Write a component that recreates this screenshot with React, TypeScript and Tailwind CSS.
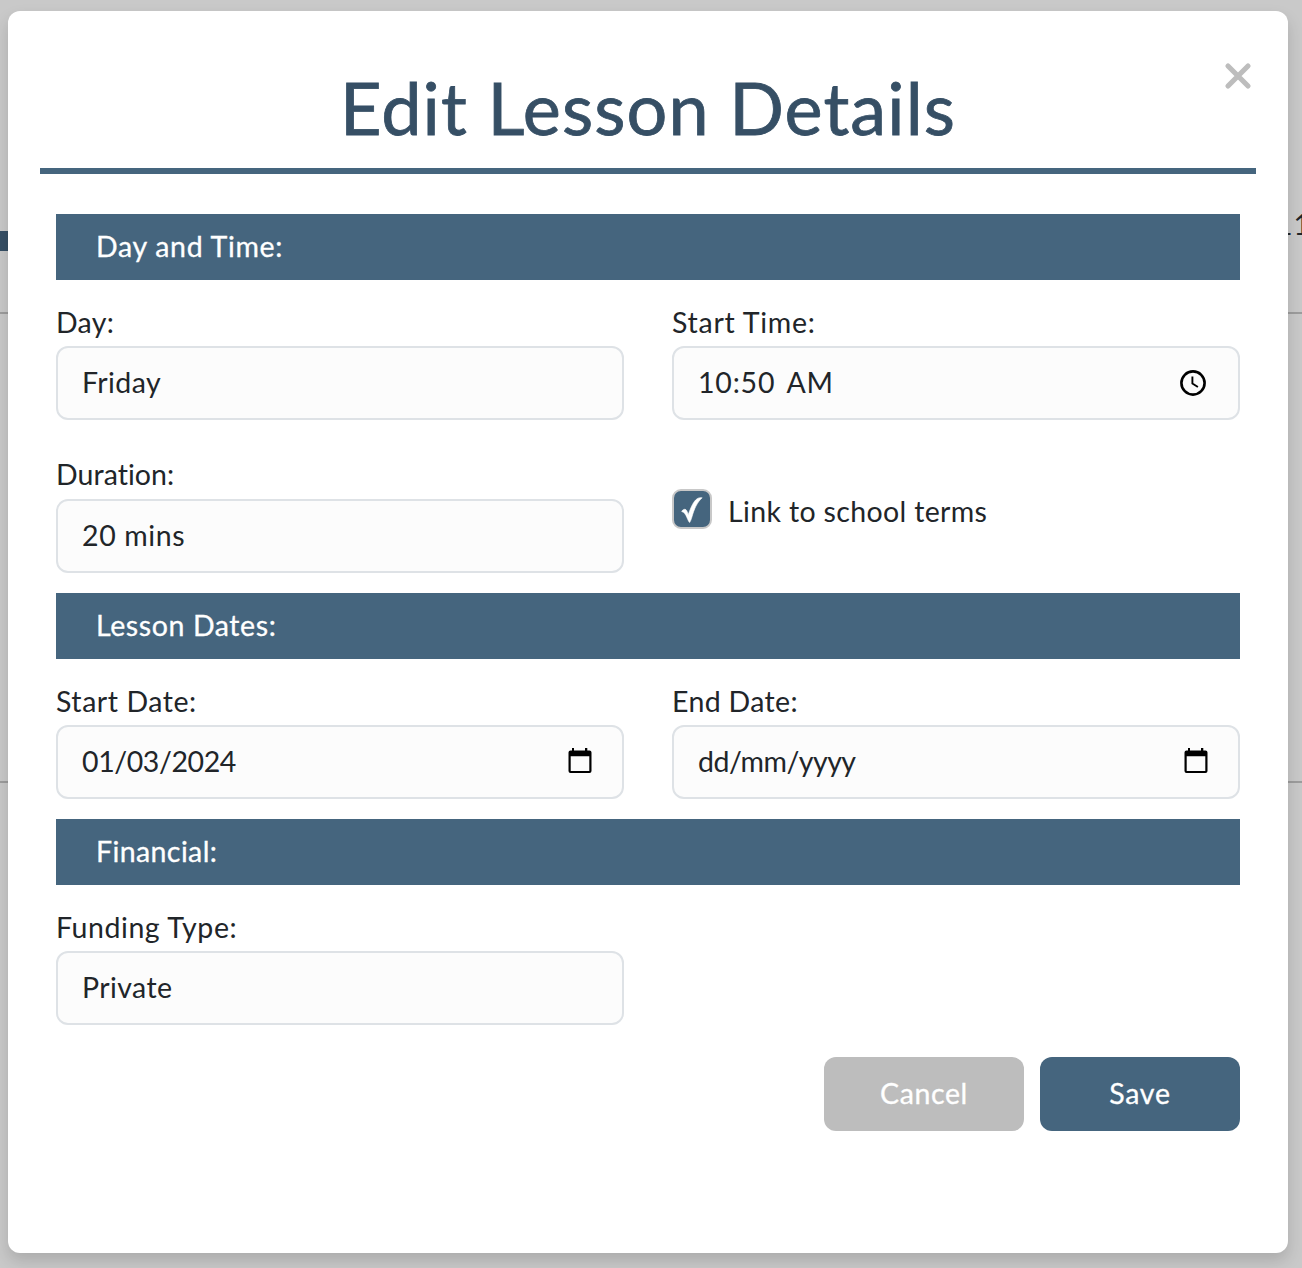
import type { ReactNode } from "react";

function SectionBar({ children }: { children: ReactNode }) {
  return (
    <h2 className="flex h-[66px] items-center bg-[#45657e] pb-[3px] pl-10 text-white [-webkit-text-stroke:0.3px_#fff]">{children}</h2>
  );
}

function Field({ label, value, icon }: { label: ReactNode; value: ReactNode; icon?: ReactNode }) {
  return (
    <div className="w-[568px]">
      <div className="flex h-12 items-center">{label}</div>
      <div className="flex h-[74px] items-center justify-between rounded-[12px] border-2 border-[#dee2e6] bg-[#fcfcfc] pb-0.5 pl-6 pr-[29px]">
        {value}
        {icon}
      </div>
    </div>
  );
}

function ClockIcon() {
  return (
    <svg className="mt-0.5 mr-0.5 size-[28px]" viewBox="0 0 28 28" fill="none" stroke="#000">
      <circle cx="14" cy="14" r="11.6" strokeWidth="2.6" />
      <path d="M13.400 7.500v7l5.500 3.500" strokeWidth="1.9" />
    </svg>
  );
}

function CalendarIcon() {
  return (
    <svg className="mr-[1.5px] h-[26px] w-[24px]" viewBox="0 0 24 26">
      <path
        fillRule="evenodd"
        d="M4 0h2v2.500h11V0h2.300v2.500H21.500a2 2 0 0 1 2 2V23a2 2 0 0 1-2 2H2.500a2 2 0 0 1-2-2V4.500a2 2 0 0 1 2-2H4zM2.700 8.200v14.700h18.600V8.200z"
      />
    </svg>
  );
}

export default function App() {
  return (
    <div className="relative h-[1268px] w-[1302px] overflow-hidden bg-[#c9c9c9] font-['Lato','Noto_Sans',sans-serif] text-[28.5px] leading-10 whitespace-nowrap text-[#212529]">
      <div className="flex h-full flex-col">
        <div className="flex h-[312px] justify-between">
          <div className="mt-[231px] h-5 w-10 bg-[#364f65]" />
          <div className="mt-[204px] w-[26px] tracking-[1px]">11</div>
        </div>
        <div className="h-[471px] border-y-2 border-[#9d9d9d]" />
      </div>

      <div
        role="dialog"
        className="absolute top-[11px] left-2 h-[1242px] w-[1280px] rounded-[12px] bg-white px-8 shadow-[0_8px_16px_rgba(0,0,0,0.15)]"
      >
        <button aria-label="Close" className="absolute top-[51px] right-[36px]">
          <svg className="size-[28px]" viewBox="0 0 28 28" stroke="#bdbdbd" strokeWidth="5.2" strokeLinecap="round">
            <path d="M4 4 24 24M24 4 4 24" />
          </svg>
        </button>
        <header className="flex h-[163px] items-center justify-center border-b-6 border-[#45657e] pt-[35px]">
          <h1 className="text-[72px] leading-none tracking-[1.1px] text-[#364f65] [-webkit-text-stroke:0.8px_#364f65]">Edit Lesson Details</h1>
        </header>

        <div className="px-4 pt-10">
          <SectionBar><span className="tracking-[0.7px]">Day and Time:</span></SectionBar>
          <div className="mt-[18px] flex justify-between">
            <Field label={<span className="tracking-[0.3px]">Day:</span>} value={<span className="tracking-[0.4px]">Friday</span>} />
            <Field
              label={<span className="tracking-[0.75px]">Start Time:</span>}
              value={<span className="tracking-[0.8px] [word-spacing:4px]">10:50 AM</span>}
              icon={<ClockIcon />}
            />
          </div>
          <div className="mt-[31px] flex justify-between">
            <Field label={<span className="mb-0.5 tracking-[0.05px]">Duration:</span>} value={<span className="tracking-[0.6px]">20 mins</span>} />
            <div className="mt-[38px] flex h-10 w-[568px]">
              <span className="flex size-10 items-center justify-center rounded-[9px] border-2 border-[#c8c8c8] bg-[#45657e]">
                <svg className="size-9" viewBox="0 0 36 36" fill="#fff" stroke="#fff" strokeWidth="0.6" strokeLinejoin="round">
                  <path d="M7.700 20.500c.6-1.500 2.500-2.700 4-2 1.200.7 1.800 3 2.500 5.200C17 16 19.500 10 23.500 7.500c1.500-.9 3.300-1 4.700-.7-5 4.200-8.200 11.500-10.300 19.200-.7 2.300-1.500 4.500-2.300 5.500-.8-.7-1.700-2.800-2.600-4.800-1.300-3-2.600-5.500-5.300-6.200z" />
                </svg>
              </span>
              <span className="mt-0.5 ml-4 tracking-[0.35px]">Link to school terms</span>
            </div>
          </div>
          <div className="mt-5"><SectionBar><span className="tracking-[0.6px]">Lesson Dates:</span></SectionBar></div>
          <div className="mt-[18px] flex justify-between">
            <Field
              label={<span className="tracking-[0.55px]">Start Date:</span>}
              value={<span className="tracking-[-0.4px]">01/03/2024</span>}
              icon={<CalendarIcon />}
            />
            <Field
              label={<span className="tracking-[0.35px]">End Date:</span>}
              value={<span className="tracking-[-0.5px]">dd/mm/yyyy</span>}
              icon={<CalendarIcon />}
            />
          </div>
          <div className="mt-5"><SectionBar><span className="tracking-[0.4px]">Financial:</span></SectionBar></div>
          <div className="mt-[18px] flex">
            <Field label={<span className="tracking-[0.55px]">Funding Type:</span>} value={<span className="tracking-[0.4px]">Private</span>} />
          </div>
          <div className="mt-8 flex justify-end gap-4 text-white [-webkit-text-stroke:0.3px_#fff]">
            <button className="h-[74px] w-[200px] rounded-[12px] bg-[#bdbdbd] pb-0.5 tracking-[0.6px]">Cancel</button>
            <button className="h-[74px] w-[200px] rounded-[12px] bg-[#45657e] pb-0.5 tracking-[0.7px]">Save</button>
          </div>
        </div>
      </div>
    </div>
  );
}
